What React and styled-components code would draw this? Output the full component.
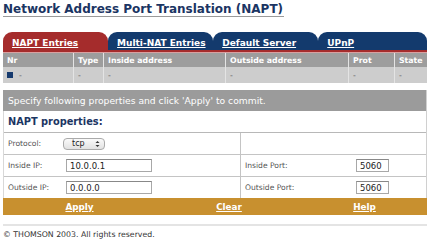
import React from "react";
import styled, { createGlobalStyle } from "styled-components";

const Global = createGlobalStyle`
  html, body { margin: 0; padding: 0; background: #fff; }
  body { font-family: "DejaVu Sans", Verdana, sans-serif; }
`;

const Page = styled.div`
  width: 431px;
  height: 242px;
  padding: 3px 4px 0 3px;
  box-sizing: border-box;
  overflow: hidden;
`;

const Title = styled.h1`
  margin: 0;
  width: 281px;
  font-size: 12px;
  font-weight: bold;
  color: #1b3563;
  line-height: 13px;
  border-bottom: 1px solid #9a9a9a;
  white-space: nowrap;
`;

const Tabs = styled.div`
  display: flex;
  margin-top: 15px;
  height: 18px;
  border-bottom: 2px solid #a52c2c;
`;

const Tab = styled.a`
  flex: ${(p) => p.$w} 0 0;
  background: ${(p) => (p.$active ? "#a52c2c" : "#133a6d")};
  border-radius: 9px 9px 0 0;
  color: #fff;
  font-size: 9px;
  font-weight: bold;
  text-decoration: underline;
  padding: 6px 0 0 9px;
  box-sizing: border-box;
  white-space: nowrap;
`;

const Grid = styled.div`
  display: grid;
  grid-template-columns: 70px 30px 122px 123px 46px 1fr;
  background: ${(p) => p.$bg};
  border-top: ${(p) => (p.$top ? "1px solid #d9a0a0" : "none")};
`;

const Cell = styled.div`
  height: ${(p) => p.$h}px;
  display: flex;
  align-items: center;
  padding-left: 4px;
  font-size: 7.8px;
  font-weight: ${(p) => (p.$head ? "bold" : "normal")};
  color: ${(p) => (p.$head ? "#fff" : "#555")};
  border-left: ${(p) => (p.$first ? "none" : "1px solid #e4e4e4")};
  gap: 6px;
`;

const Square = styled.span`
  width: 6px;
  height: 6px;
  background: #163a6e;
  display: inline-block;
`;

const Hint = styled.div`
  margin-top: 7px;
  height: 21px;
  background: #9b9b9b;
  color: #fff;
  font-size: 9.2px;
  display: flex;
  align-items: center;
  padding-left: 5px;
  border-right: 1px solid #d0d0d0;
`;

const Form = styled.div`
  border-right: 1px solid #d0d0d0;
  border-left: 1px solid #d8d8d8;
`;

const FormTitle = styled.div`
  font-size: 9.8px;
  font-weight: bold;
  color: #1b3563;
  line-height: 12px;
  padding: 5px 0 4px 4px;
  border-bottom: 1px solid #b8b8b8;
`;

const FormRow = styled.div`
  display: grid;
  grid-template-columns: 58px 178px 115px 1fr;
  height: 21px;
  border-bottom: ${(p) => (p.$last ? "none" : "1px solid #c4c4c4")};
`;

const FCell = styled.div`
  display: flex;
  align-items: center;
  padding-left: ${(p) => (p.$tight ? 1 : 4)}px;
  font-size: 7.6px;
  color: #555;
  border-left: ${(p) => (p.$sep ? "1px solid #c4c4c4" : "none")};
`;

const Input = styled.div`
  width: ${(p) => p.$w}px;
  height: 13px;
  border: 1px solid #a8a8a8;
  border-top-color: #888;
  box-sizing: border-box;
  font-size: 8.5px;
  color: #222;
  padding-left: 3px;
  display: flex;
  align-items: center;
  background: #fff;
`;

const Select = styled.div`
  width: 42px;
  height: 12px;
  margin-left: -3px;
  border: 1px solid #aaa;
  border-radius: 4px;
  background: linear-gradient(#fafafa, #e2e2e2);
  box-sizing: border-box;
  font-size: 8px;
  color: #222;
  display: flex;
  align-items: center;
  justify-content: space-between;
  padding: 0 4px 0 8px;
`;

const Arrows = styled.svg`
  width: 5px;
  height: 8px;
`;

const Actions = styled.div`
  display: grid;
  grid-template-columns: 153px 146px 1fr;
  height: 17px;
  background: #c8902f;
`;

const Action = styled.a`
  display: flex;
  align-items: center;
  justify-content: center;
  color: #fff;
  font-size: 8.8px;
  font-weight: bold;
  text-decoration: underline;
`;

const Shadow = styled.div`
  height: 11px;
  border-bottom: 2px solid #e4e4e4;
  box-sizing: border-box;
`;

const Footer = styled.div`
  font-size: 7.8px;
  color: #333;
  padding-top: 4px;
`;

export default function App() {
  const cols = ["Nr", "Type", "Inside address", "Outside address", "Prot", "State"];
  return (
    <Page>
      <Global />
      <Title>Network Address Port Translation (NAPT)</Title>
      <Tabs>
        <Tab $active $w={105}>NAPT Entries</Tab>
        <Tab $w={105}>Multi-NAT Entries</Tab>
        <Tab $w={105}>Default Server</Tab>
        <Tab $w={109}>UPnP</Tab>
      </Tabs>
      <Grid $bg="#9d9d9d" $top>
        {cols.map((c, i) => (
          <Cell key={c} $h={14} $head $first={i === 0}>{c}</Cell>
        ))}
      </Grid>
      <Grid $bg="#cdcdcd">
        {cols.map((c, i) => (
          <Cell key={c} $h={16} $first={i === 0}>
            {i === 0 && <Square />}-
          </Cell>
        ))}
      </Grid>
      <Hint>Specify following properties and click 'Apply' to commit.</Hint>
      <Form>
        <FormTitle>NAPT properties:</FormTitle>
        <FormRow>
          <FCell>Protocol:</FCell>
          <FCell>
            <Select>
              tcp
              <Arrows viewBox="0 0 5 8">
                <path d="M0.5 3 L2.5 1 L4.5 3 Z M0.5 5 L2.5 7 L4.5 5 Z" fill="#333" />
              </Arrows>
            </Select>
          </FCell>
          <FCell $sep />
          <FCell />
        </FormRow>
        <FormRow>
          <FCell>Inside IP:</FCell>
          <FCell><Input $w={86}>10.0.0.1</Input></FCell>
          <FCell $sep>Inside Port:</FCell>
          <FCell $tight><Input $w={33}>5060</Input></FCell>
        </FormRow>
        <FormRow $last>
          <FCell>Outside IP:</FCell>
          <FCell><Input $w={86}>0.0.0.0</Input></FCell>
          <FCell $sep>Outside Port:</FCell>
          <FCell $tight><Input $w={33}>5060</Input></FCell>
        </FormRow>
      </Form>
      <Actions>
        <Action>Apply</Action>
        <Action>Clear</Action>
        <Action>Help</Action>
      </Actions>
      <Shadow />
      <Footer>© THOMSON 2003. All rights reserved.</Footer>
    </Page>
  );
}
